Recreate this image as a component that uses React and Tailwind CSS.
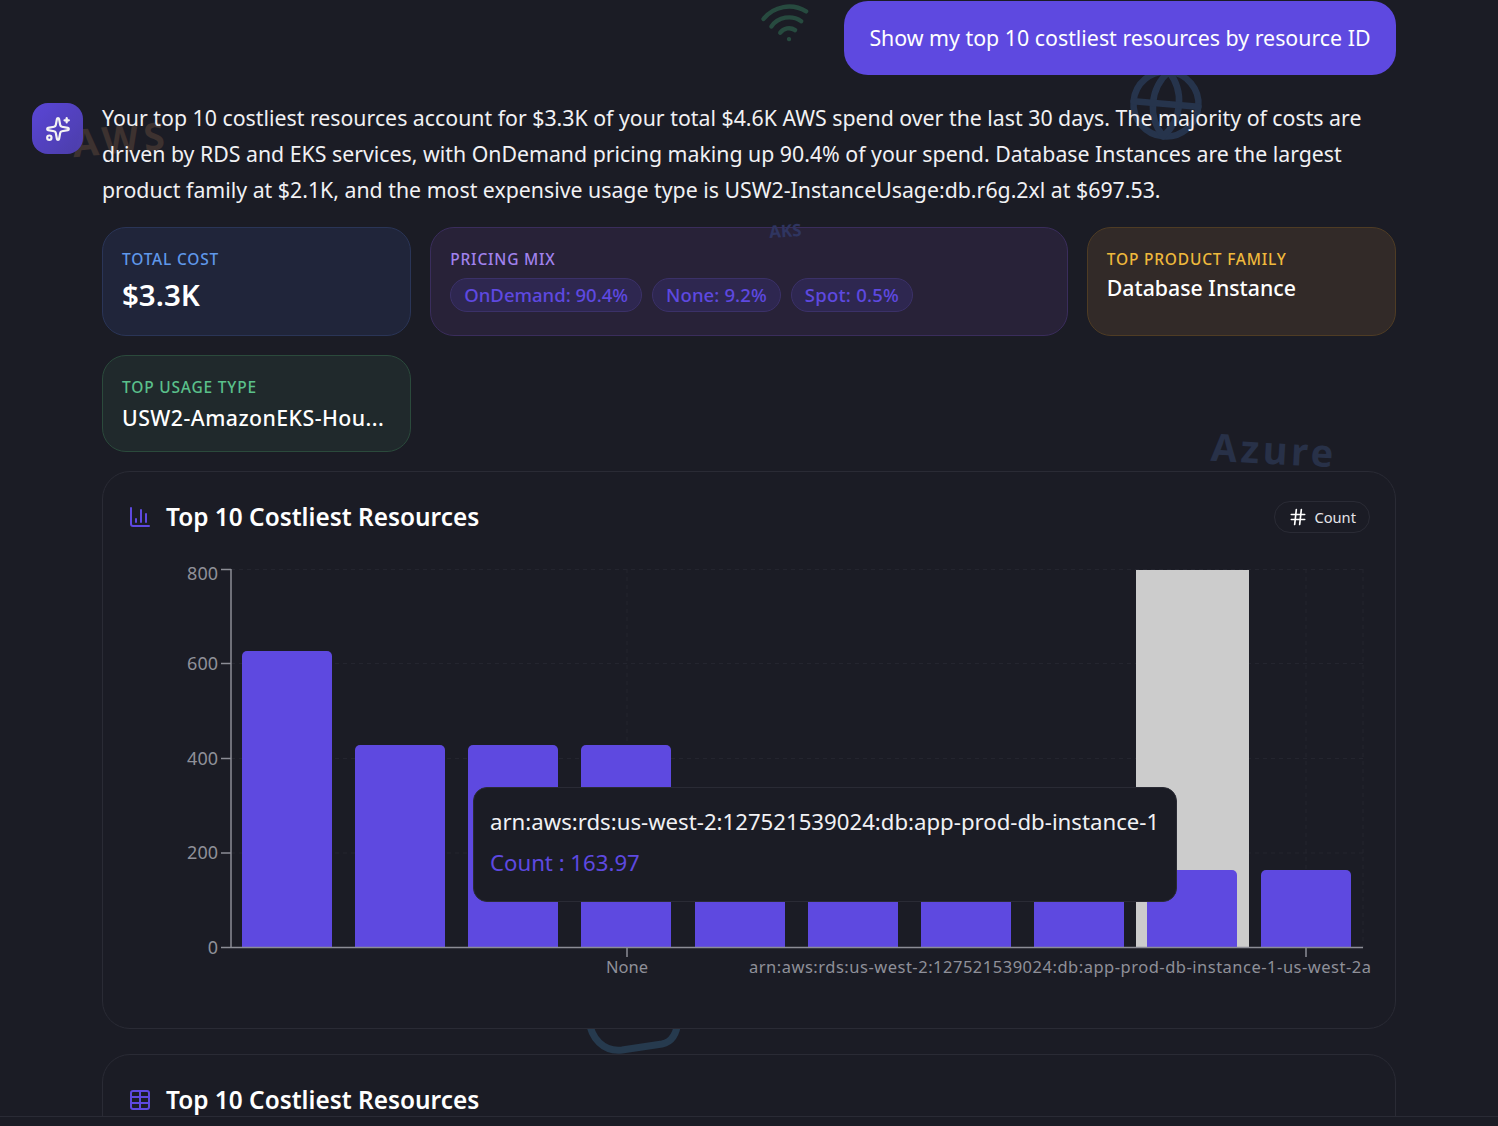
import React from "react";
import { Sparkles, ChartColumn, Table, Hash, Wifi, Globe } from "lucide-react";

const bars = [
  { x: 242, top: 651 },
  { x: 355, top: 745 },
  { x: 468, top: 745 },
  { x: 581, top: 745 },
  { x: 695, top: 870 },
  { x: 808, top: 870 },
  { x: 921, top: 870 },
  { x: 1034, top: 870 },
  { x: 1147, top: 870 },
  { x: 1261, top: 870 },
];

const yTicks = [
  { label: "800", y: 569.5, textY: 580 },
  { label: "600", y: 663.5, textY: 669.5 },
  { label: "400", y: 758.5, textY: 764.5 },
  { label: "200", y: 853, textY: 859 },
  { label: "0", y: 947.5, textY: 953.5 },
];

const Chart = () => (
  <svg viewBox="128 559 1242 444" className="block w-[1242px] h-[444px] overflow-visible">
    {/* grid */}
    <g stroke="#24252f" strokeDasharray="4 4" strokeWidth="1" fill="none">
      {yTicks.slice(0, 4).map((t) => (
        <line key={t.y} x1="231" x2="1363" y1={t.y} y2={t.y} />
      ))}
      <line x1="627" x2="627" y1="569" y2="948" />
      <line x1="1306" x2="1306" y1="569" y2="948" />
      <line x1="1363" x2="1363" y1="569" y2="948" />
    </g>

    <rect x="1136" y="570" width="113" height="378" fill="#cccccc" />

    {bars.map((b) => (
      <path
        key={b.x}
        d={`M${b.x} 948V${b.top + 5}a5 5 0 0 1 5 -5h80a5 5 0 0 1 5 5V948z`}
        fill="#5e49e0"
      />
    ))}

    {/* axes */}
    <g stroke="#8c8d96" strokeWidth="1.5" fill="none">
      <line x1="231" x2="231" y1="569" y2="948" />
      <line x1="231" x2="1363" y1="947.5" y2="947.5" />
      {yTicks.map((t) => (
        <line key={t.y} x1="221" x2="231" y1={t.y} y2={t.y} />
      ))}
      <line x1="627" x2="627" y1="948" y2="957" />
      <line x1="1306" x2="1306" y1="948" y2="957" />
    </g>

    <g fill="#8f9099" fontSize="16.5" style={{ fontFamily: "'Noto Sans', sans-serif" }}>
      {yTicks.map((t) => (
        <text key={t.y} x="218" y={t.textY} textAnchor="end" fontSize="18">
          {t.label}
        </text>
      ))}
      <text x="627" y="973" textAnchor="middle">None</text>
      <text x="1371" y="973" textAnchor="end" textLength="622" lengthAdjust="spacing">
        arn:aws:rds:us-west-2:127521539024:db:app-prod-db-instance-1-us-west-2a
      </text>
    </g>
  </svg>
);

const StatCard = ({ label, className, labelClass, children }) => (
  <div className={`rounded-[24px] border px-[19px] pt-[20px] pb-[17px] ${className}`}>
    <div className={`text-[15.5px] leading-[22px] font-medium tracking-[0.8px] ${labelClass}`}>{label}</div>
    {children}
  </div>
);

const Chip = ({ className = "", children }) => (
  <span className={`rounded-full border border-[#3b3168] bg-[#2e2750] px-[13px] h-[34px] flex items-center text-[18.5px] font-medium text-[#5e49e0] whitespace-nowrap ${className}`}>
    {children}
  </span>
);

export default function App() {
  return (
    <div
      className="relative h-screen w-full overflow-hidden bg-[#1b1c25] text-white"
      style={{ fontFamily: "'Noto Sans', sans-serif" }}
    >
      {/* faint background decorations */}
      <div className="absolute left-[72px] top-[116px] -rotate-[5deg] text-[38px] leading-[44px] font-bold tracking-[5px] text-[#3d3230]">AWS</div>
      <Wifi className="absolute left-[760px] top-[-4px] text-[#274a3f] -rotate-[10deg]" size={52} strokeWidth={2} />
      <Globe className="absolute left-[1127px] top-[65px] text-[#26344c] rotate-[5deg]" size={78} strokeWidth={2} />
      <div className="absolute left-[1211px] top-[425px] rotate-[3deg] text-[38px] leading-[48px] font-bold tracking-[3.5px] text-[#283148]">Azure</div>
      <svg className="absolute left-[580px] top-[1020px]" width="104" height="40" viewBox="0 0 104 40" fill="none">
        <path d="M9 0c2 18 14 32 33 30l40-6c10-2 15-10 16-24" stroke="#263a4e" strokeWidth="7" />
      </svg>

      {/* messages */}
      <div className="relative pl-[32px] pr-[102px] pt-[1px]">
        <div className="flex justify-end">
          <div className="h-[74px] flex items-center rounded-[24px] bg-[#5e49e0] px-[25.5px] text-[21.35px] whitespace-nowrap">
            Show my top 10 costliest resources by resource ID
          </div>
        </div>

        <div className="mt-[28px] flex gap-[19px]">
          <div className="w-[51px] h-[51px] shrink-0 rounded-[16px] flex items-center justify-center bg-gradient-to-br from-[#5e49e0] to-[#4e3fb0] opacity-95">
            <Sparkles size={26} strokeWidth={2} />
          </div>

          <div className="min-w-0 flex-1">
            <p className="-mt-[3px] text-[21.3px] leading-[36px] text-[#f1f1f4]">
              Your top 10 costliest resources account for $3.3K of your total $4.6K AWS spend over the last 30 days. The majority of costs are driven by RDS and EKS services, with OnDemand pricing making up 90.4% of your spend. Database Instances are the largest product family at $2.1K, and the most expensive usage type is USW2-InstanceUsage:db.r6g.2xl at $697.53.
            </p>

            <div className="mt-[19px] grid grid-cols-4 gap-[19px]">
              <StatCard label="TOTAL COST" className="bg-[#20253a] border-[#2a3557]" labelClass="text-[#5f98ea]">
                <div className="mt-[6px] mb-[4px] text-[29.5px] leading-[38px] font-semibold">$3.3K</div>
              </StatCard>

              <StatCard label="PRICING MIX" className="col-span-2 bg-[#282238] border-[#3a2d5c]" labelClass="text-[#a182ee]">
                <div className="mt-[8px] flex gap-[10px]">
                  <Chip>OnDemand: 90.4%</Chip>
                  <Chip className="tracking-[0.1px]">None: 9.2%</Chip>
                  <Chip className="tracking-[0.25px]">Spot: 0.5%</Chip>
                </div>
              </StatCard>

              <StatCard label="TOP PRODUCT FAMILY" className="bg-[#322a28] border-[#4f3c24]" labelClass="text-[#efb93c]">
                <div className="mt-[2px] text-[21.3px] leading-[32px] font-medium">Database Instance</div>
              </StatCard>

              <StatCard label="TOP USAGE TYPE" className="bg-[#20292c] border-[#2b4a3c]" labelClass="text-[#5ac08b]">
                <div className="mt-[4px] text-[21.3px] leading-[32px] font-medium tracking-[0.45px] whitespace-nowrap">USW2-AmazonEKS-Hou...</div>
              </StatCard>
            </div>

            {/* chart card */}
            <div className="relative mt-[19px] rounded-[28px] border border-[#2a2b35] bg-[#1b1c25] px-[25px] pt-[29px] pb-[25px]">
              <div className="flex items-center justify-between h-[32px]">
                <div className="flex items-center gap-[14px]">
                  <ChartColumn size={24} strokeWidth={2} className="text-[#5e49e0]" />
                  <h2 className="text-[24.4px] font-semibold">Top 10 Costliest Resources</h2>
                </div>
                <div className="h-[32px] rounded-full border border-[#2a2b35] flex items-center gap-[6px] px-[13px] text-[14.7px] text-[#e4e4e8]">
                  <Hash size={20} strokeWidth={2} className="text-white" />
                  Count
                </div>
              </div>

              <div className="relative mt-[26px]">
                <Chart />
                <div className="absolute left-[345px] top-[228px] w-[704px] h-[115px] rounded-[14px] border border-[#2a2b35] bg-[#1b1c25] pl-[16px] pt-[18px]">
                  <div className="text-[22.2px] leading-[32px] text-[#f1f1f4] whitespace-nowrap">
                    arn:aws:rds:us-west-2:127521539024:db:app-prod-db-instance-1
                  </div>
                  <div className="mt-[9px] text-[22.2px] leading-[32px] text-[#5e49e0]">Count : 163.97</div>
                </div>
              </div>
            </div>

            {/* table card, cut off by the bottom bar */}
            <div className="relative mt-[25px] rounded-t-[28px] border border-[#2a2b35] bg-[#1b1c25] px-[25px] pt-[29px] h-[200px]">
              <div className="flex items-center gap-[14px] h-[32px]">
                <Table size={24} strokeWidth={2} className="text-[#5e49e0]" />
                <h2 className="text-[24.4px] font-semibold">Top 10 Costliest Resources</h2>
              </div>
            </div>
          </div>
        </div>
      </div>

      {/* this one shows over the pricing card */}
      <div className="absolute left-[769px] top-[220px] -rotate-[4deg] text-[17px] leading-[22px] font-bold text-[#2f3560]">AKS</div>

      {/* bottom bar */}
      <div className="absolute inset-x-0 bottom-0 h-[10px] border-t border-[#2a2b35] bg-[#1b1c25]" />
    </div>
  );
}
